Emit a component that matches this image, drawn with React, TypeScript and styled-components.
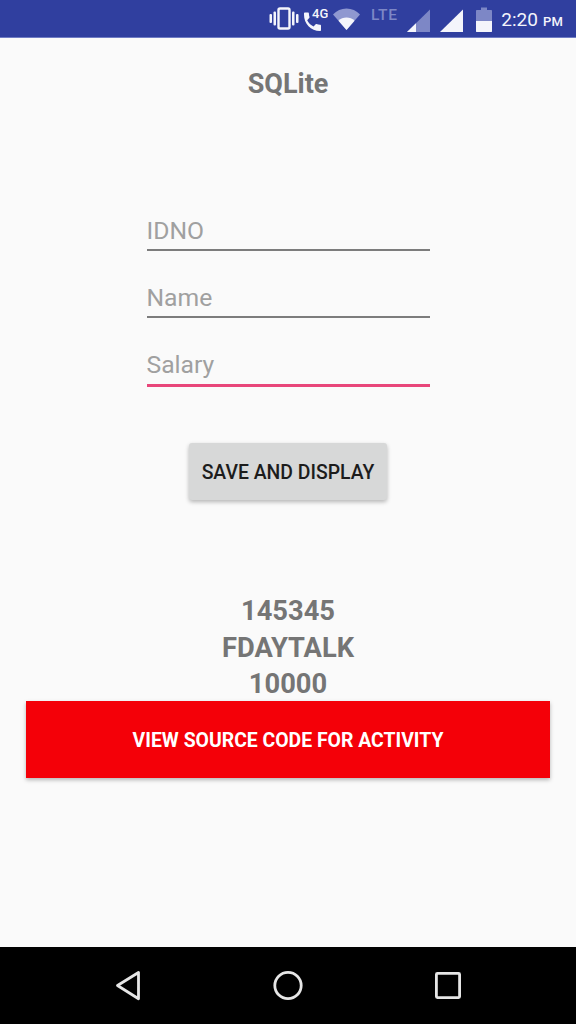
import React from 'react';
import styled, { createGlobalStyle } from 'styled-components';

const GlobalStyle = createGlobalStyle`
  html, body {
    margin: 0;
    padding: 0;
    background: #fafafa;
    font-family: Roboto, "Liberation Sans", sans-serif;
  }
`;

const Page = styled.div`
  display: flex;
  flex-direction: column;
  width: 576px;
  height: 1024px;
  overflow: hidden;
`;

const StatusBar = styled.div`
  display: flex;
  align-items: flex-start;
  justify-content: flex-end;
  flex: 0 0 38px;
  box-sizing: border-box;
  height: 38px;
  padding: 0 13px 0 0;
  background: #303f9f;
  border-bottom: 1px solid #6f7cc4;
  color: #fff;
`;

const StatusIcon = styled.svg<{ $gap: number }>`
  display: block;
  flex: none;
  margin-right: ${({ $gap }) => $gap}px;
`;

const Clock = styled.div`
  display: flex;
  align-items: baseline;
  gap: 5px;
  margin-top: 7px;
  font-size: 19px;
  font-weight: 400;
  line-height: 26px;
  color: #f4f5fb;
`;

const Meridiem = styled.span`
  font-size: 13px;
  font-weight: 500;
  letter-spacing: 0.2px;
`;

const Content = styled.main`
  display: flex;
  flex: 1;
  flex-direction: column;
  align-items: center;
  background: #fafafa;
`;

const Title = styled.h1`
  margin: 30px 0 0;
  font-size: 27px;
  font-weight: 700;
  line-height: 32px;
  color: #757575;
`;

const Form = styled.div`
  display: flex;
  flex-direction: column;
  width: 283px;
  margin-top: 91px;
  gap: 7px;
`;

const Field = styled.div<{ $focused?: boolean }>`
  box-sizing: border-box;
  height: ${({ $focused }) => ($focused ? '62px' : '60px')};
  padding-top: 26px;
  font-size: 24.7px;
  line-height: 28px;
  color: #a0a0a0;
  border-bottom: ${({ $focused }) => ($focused ? '3px solid #e8467a' : '2px solid #7c7c7c')};
`;

const SaveButton = styled.button`
  width: 198px;
  height: 57px;
  margin-top: 56px;
  padding: 1px 0 0;
  border: 0;
  border-radius: 3px;
  background: #d7d8d8;
  box-shadow: 0 2px 4px rgba(0, 0, 0, 0.28);
  font-family: inherit;
  font-size: 19.4px;
  font-weight: 500;
  color: #1c1c1c;
`;

const Result = styled.div`
  margin-top: 93px;
  font-size: 27.3px;
  font-weight: 700;
  line-height: 36.5px;
  text-align: center;
  color: #757575;
`;

const SourceButton = styled.button`
  flex: none;
  width: 524px;
  height: 77px;
  margin-top: -2px;
  padding: 2px 0 0;
  border: 0;
  background: #f40008;
  box-shadow: 0 2px 4px rgba(0, 0, 0, 0.28);
  font-family: inherit;
  font-size: 19.4px;
  font-weight: 700;
  color: #fff;
`;

const NavBar = styled.nav`
  display: flex;
  flex: 0 0 77px;
  box-sizing: border-box;
  align-items: flex-start;
  justify-content: center;
  gap: 118px;
  padding-top: 22px;
  background: #000;
`;

const NavIcon = styled.svg`
  display: block;
  width: 42px;
  height: 36px;
  fill: none;
  stroke: #e6e6e6;
  stroke-width: 2.8;
  stroke-linejoin: round;
`;

export default function App() {
  return (
    <Page>
      <GlobalStyle />
      <StatusBar>
        {/* vibrate */}
        <StatusIcon $gap={4} width="30" height="38" viewBox="0 0 30 38" fill="#f4f5fb">
          <rect x="0.5" y="14" width="2.5" height="9" rx="1" />
          <rect x="4.5" y="11.5" width="2.5" height="14" rx="1" />
          <rect x="9.5" y="8.5" width="11" height="20" rx="1.5" fill="none" stroke="#f4f5fb" strokeWidth="2.4" />
          <rect x="23" y="11.5" width="2.5" height="14" rx="1" />
          <rect x="27" y="14" width="2.5" height="9" rx="1" />
        </StatusIcon>
        {/* call over 4G */}
        <StatusIcon $gap={5} width="25" height="38" viewBox="0 0 25 38" fill="#f4f5fb">
          <path d="M1 14.5c-.2 9 7 16.5 16 16.5.7 0 1-.5 1-1v-4.3c0-.6-.4-1-1-1-1.2 0-2.4-.2-3.5-.6-.4-.1-.8 0-1 .3l-2 2.1c-2.7-1.4-4.9-3.6-6.3-6.3l2-2.1c.3-.3.4-.7.3-1-.4-1.1-.6-2.3-.6-3.5 0-.6-.4-1-1-1H2c-.5 0-1 .4-1 1z" />
          <text x="9" y="18" fontFamily="Roboto, sans-serif" fontSize="13" fontWeight="500">4G</text>
        </StatusIcon>
        {/* wifi */}
        <StatusIcon $gap={11} width="27" height="38" viewBox="0 0 27 38">
          <path d="M0 14.5C3.5 10.8 8.3 8.5 13.5 8.5S23.5 10.8 27 14.5L13.5 30z" fill="#8f98d0" />
          <path d="M5.5 20.8C7.6 18.8 10.4 17.6 13.5 17.6s5.9 1.2 8 3.2L13.5 30z" fill="#f4f5fb" />
        </StatusIcon>
        {/* dim LTE label */}
        <StatusIcon $gap={9} width="27" height="38" viewBox="0 0 27 38">
          <text x="0" y="19.5" fontFamily="Roboto, sans-serif" fontSize="15.5" fontWeight="500" fill="#7d87c6" letterSpacing="0.6">LTE</text>
        </StatusIcon>
        {/* signal, sim 1 */}
        <StatusIcon $gap={10} width="23" height="38" viewBox="0 0 23 38">
          <path d="M0 32L23 9.5V32z" fill="#7d87c6" />
          <path d="M0 32L9 23.2V32z" fill="#f4f5fb" />
        </StatusIcon>
        {/* signal, sim 2 */}
        <StatusIcon $gap={13} width="23" height="38" viewBox="0 0 23 38">
          <path d="M0 32L23 9.5V32z" fill="#f4f5fb" />
        </StatusIcon>
        {/* battery */}
        <StatusIcon $gap={9} width="16" height="38" viewBox="0 0 16 38">
          <path d="M5 7.5h6V10h4c.6 0 1 .4 1 1v20c0 .6-.4 1-1 1H1c-.6 0-1-.4-1-1V11c0-.6.4-1 1-1h4z" fill="#7d87c6" />
          <path d="M0 21h16v10c0 .6-.4 1-1 1H1c-.6 0-1-.4-1-1z" fill="#f4f5fb" />
        </StatusIcon>
        <Clock>
          2:20<Meridiem>PM</Meridiem>
        </Clock>
      </StatusBar>
      <Content>
        <Title>SQLite</Title>
        <Form>
          <Field>IDNO</Field>
          <Field>Name</Field>
          <Field $focused>Salary</Field>
        </Form>
        <SaveButton>SAVE AND DISPLAY</SaveButton>
        <Result>
          145345
          <br />
          FDAYTALK
          <br />
          10000
        </Result>
        <SourceButton>VIEW SOURCE CODE FOR ACTIVITY</SourceButton>
      </Content>
      <NavBar>
        <NavIcon viewBox="0 0 42 36">
          <path d="M31.5 3.5V29.8L10.5 16.5z" />
        </NavIcon>
        <NavIcon viewBox="0 0 42 36">
          <circle cx="21" cy="16.5" r="13.2" />
        </NavIcon>
        <NavIcon viewBox="0 0 42 36">
          <rect x="9.4" y="4.4" width="23.2" height="24.2" rx="1" />
        </NavIcon>
      </NavBar>
    </Page>
  );
}
